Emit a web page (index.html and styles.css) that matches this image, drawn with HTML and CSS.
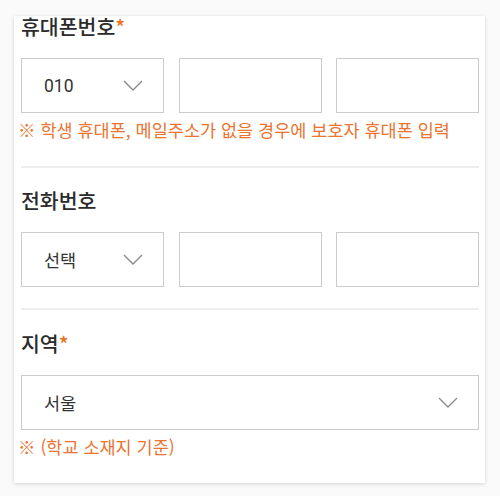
FILE: index.html
```html
<!DOCTYPE html>
<html lang="ko">
<head>
<meta charset="utf-8">
<link rel="stylesheet" href="styles.css">
</head>
<body>
<div class="card">
  <section class="field">
    <div class="label">휴대폰번호<span class="req">*</span></div>
    <div class="row three">
      <div class="box select"><span>010</span><svg class="chev" width="20" height="11" viewBox="0 0 20 11"><polyline points="1,1 10,10 19,1"/></svg></div>
      <div class="box"></div>
      <div class="box"></div>
    </div>
    <p class="note">※ 학생 휴대폰, 메일주소가 없을 경우에 보호자 휴대폰 입력</p>
  </section>
  <section class="field">
    <div class="label">전화번호</div>
    <div class="row three">
      <div class="box select"><span>선택</span><svg class="chev" width="20" height="11" viewBox="0 0 20 11"><polyline points="1,1 10,10 19,1"/></svg></div>
      <div class="box"></div>
      <div class="box"></div>
    </div>
  </section>
  <section class="field last">
    <div class="label">지역<span class="req">*</span></div>
    <div class="row">
      <div class="box select wide"><span>서울</span><svg class="chev" width="20" height="11" viewBox="0 0 20 11"><polyline points="1,1 10,10 19,1"/></svg></div>
    </div>
    <p class="note">※ (학교 소재지 기준)</p>
  </section>
</div>
</body>
</html>
```

FILE: styles.css
```css
* { box-sizing: border-box; }
html, body { margin: 0; padding: 0; }
body {
  background: #fafafa;
  font-family: "Roboto", "Noto Sans CJK KR", sans-serif;
  color: #333;
  padding: 16px 15px 13px 14px;
}
.card {
  background: #fff;
  box-shadow: 0 1px 4px rgba(0, 0, 0, 0.16);
  padding: 0 6px 0 7px;
  height: 467px;
}
.field {
  padding: 22px 0 21px;
  border-bottom: 2px solid #eeeeee;
}
.field:first-child { padding-top: 0; }
.field.last { border-bottom: none; padding-top: 23px; padding-bottom: 20px; }
.label {
  font-family: "Noto Sans CJK KR", sans-serif;
  font-size: 20.5px;
  font-weight: 500;
  line-height: 20px;
  color: #2b2b2b;
  margin-bottom: 22px;
}
.req { color: #f07022; }
.row { display: flex; }
.row.three {
  display: grid;
  grid-template-columns: repeat(3, 1fr);
  column-gap: 14.5px;
}
.box {
  height: 55px;
  border: 1px solid #cccccc;
  background: #fff;
}
.box.wide { flex: 1; }
.select {
  display: flex;
  align-items: center;
  justify-content: space-between;
  padding: 0 20px 0 22px;
  font-size: 17.5px;
  color: #333;
}
.chev {
  fill: none;
  stroke: #8a8a8a;
  stroke-width: 1.4;
}
.note {
  margin: 6px 0 4px;
  font-family: "Noto Sans CJK KR", sans-serif;
  font-size: 17.5px;
  font-weight: 400;
  line-height: 22px;
  color: #ea7430;
  margin-left: -3px;
}
```
